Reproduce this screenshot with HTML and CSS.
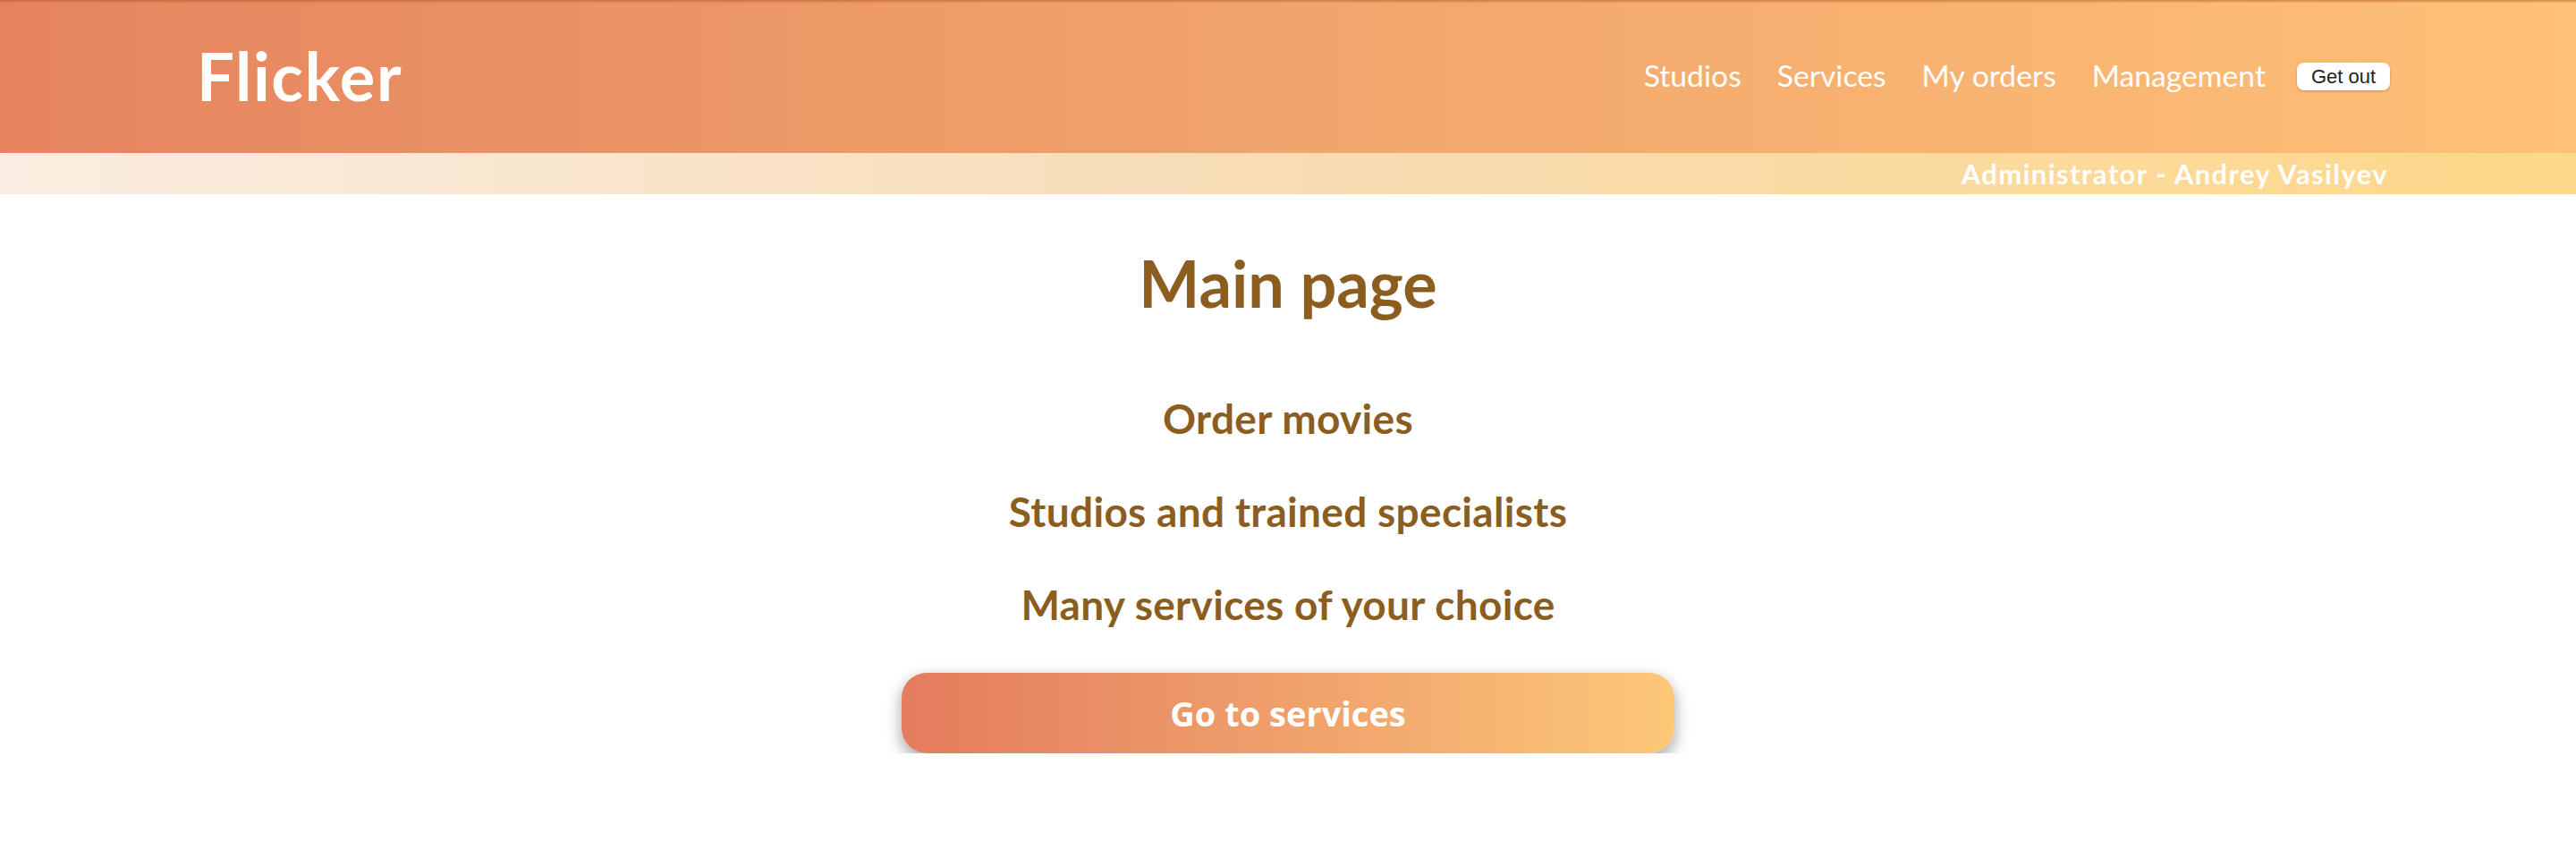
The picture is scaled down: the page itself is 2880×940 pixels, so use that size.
FILE: index.html
```html
<!DOCTYPE html>
<html lang="en">
<head>
<meta charset="utf-8">
<title>Flicker</title>
<link rel="stylesheet" href="styles.css">
</head>
<body>
<header class="topbar">
  <div class="logo">Flicker</div>
  <nav class="nav">
    <a class="nav-link" href="#">Studios</a>
    <a class="nav-link" href="#">Services</a>
    <a class="nav-link" href="#">My orders</a>
    <a class="nav-link" href="#">Management</a>
    <button class="logout" type="button">Get out</button>
  </nav>
</header>
<div class="userbar">
  <span class="user">Administrator - Andrey Vasilyev</span>
</div>
<main class="main">
  <h1 class="title">Main page</h1>
  <p class="feature">Order movies</p>
  <p class="feature">Studios and trained specialists</p>
  <p class="feature">Many services of your choice</p>
  <button class="cta" type="button">Go to services</button>
</main>
</body>
</html>
```
FILE: styles.css
```css
* { box-sizing: border-box; }
html, body { margin: 0; padding: 0; background: #ffffff; }
body { font-family: "Lato", "DejaVu Sans", sans-serif; }

.topbar {
  height: 171px;
  display: flex;
  align-items: center;
  justify-content: space-between;
  padding: 0 208px 0 220px;
  background: linear-gradient(to right, #e5845f 0%, #f1a46c 50%, #fec177 100%);
  box-shadow: inset 0 3px 2px -1px rgba(170, 80, 30, 0.45);
}
.logo {
  color: #ffffff;
  font-weight: 700;
  font-size: 74px;
  line-height: 74px;
  letter-spacing: 1.6px;
  margin-top: -2px;
}
.nav {
  display: flex;
  align-items: center;
  gap: 40px;
}
.nav-link {
  color: #ffffff;
  text-decoration: none;
  font-size: 33.7px;
  line-height: 36px;
  margin-top: -4px;
}
.logout {
  margin-left: -5px;
  width: 104px;
  height: 31px;
  padding: 0;
  border: none;
  border-radius: 8px;
  background: #ffffff;
  color: #222222;
  font-family: "Liberation Sans", Arial, sans-serif;
  font-size: 22px;
  line-height: 31px;
  box-shadow: 0 1px 3px rgba(120, 60, 20, 0.35);
}

.userbar {
  height: 46px;
  display: flex;
  justify-content: flex-end;
  align-items: center;
  padding-right: 210px;
  background: linear-gradient(to right, #faede1 0%, #f7dcb4 50%, #fed88a 100%);
}
.user {
  color: #ffffff;
  font-weight: 700;
  font-size: 31px;
  line-height: 46px;
  letter-spacing: 1.4px;
}

.main {
  display: flex;
  flex-direction: column;
  align-items: center;
  padding-top: 63px;
  color: #8b5e1f;
}
.title {
  margin: 0 0 64px;
  font-size: 72px;
  line-height: 72px;
  font-weight: 700;
}
.feature {
  margin: 0;
  font-size: 46px;
  line-height: 104px;
  font-weight: 700;
  letter-spacing: 0.3px;
}
.cta {
  margin-top: 24px;
  width: 864px;
  height: 90px;
  border: none;
  border-radius: 28px;
  background: linear-gradient(to right, #e47c5e 0%, #efa06c 50%, #fdc878 100%);
  color: #ffffff;
  font-family: "Open Sans", sans-serif;
  font-weight: 700;
  font-size: 38px;
  box-shadow: 0 7px 16px 2px rgba(0, 0, 0, 0.3);
}
```
